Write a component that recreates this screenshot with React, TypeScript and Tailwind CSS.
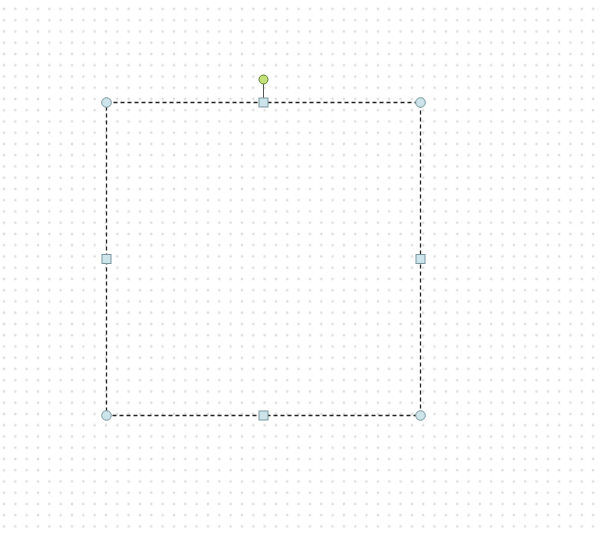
import React from 'react';

const handleFill = '#cde4ea';
const handleStroke = '#7a979f';

export default function App() {
  const left = 106.5;
  const right = 420.5;
  const top = 102.5;
  const bottom = 415.5;
  const midX = 263.5;
  const midY = 259;

  const corners = [
    [left, top],
    [right, top],
    [left, bottom],
    [right, bottom],
  ];
  const sides = [
    [midX, top],
    [midX, bottom],
    [left, midY],
    [right, midY],
  ];

  return (
    <div className="w-[600px] h-[534px] bg-white overflow-hidden">
      <svg width="600" height="534" className="block">
        <defs>
          <pattern id="dots" x="4" y="9" width="11.33" height="11.25" patternUnits="userSpaceOnUse">
            <circle cx="0" cy="0" r="1.3" fill="#dedede" />
            <circle cx="11.33" cy="0" r="1.3" fill="#dedede" />
            <circle cx="0" cy="11.25" r="1.3" fill="#dedede" />
            <circle cx="11.33" cy="11.25" r="1.3" fill="#dedede" />
          </pattern>
        </defs>
        <rect x="0" y="0" width="600" height="534" fill="url(#dots)" />

        <rect
          x={left}
          y={top}
          width={right - left}
          height={bottom - top}
          fill="none"
          stroke="#222"
          strokeWidth="1.3"
          strokeDasharray="4 3"
        />

        <line x1={midX} y1={top - 4} x2={midX} y2={84} stroke="#555" strokeWidth="1" />
        <circle cx={midX} cy={79.5} r="4.5" fill="#c3e07a" stroke="#5f7f34" strokeWidth="1" />

        {sides.map(([x, y], i) => (
          <rect key={i} x={x - 4.5} y={y - 4.5} width="9" height="9" fill={handleFill} stroke={handleStroke} strokeWidth="1" />
        ))}
        {corners.map(([x, y], i) => (
          <circle key={i} cx={x} cy={y} r="4.8" fill={handleFill} stroke={handleStroke} strokeWidth="1" />
        ))}
      </svg>
    </div>
  );
}
